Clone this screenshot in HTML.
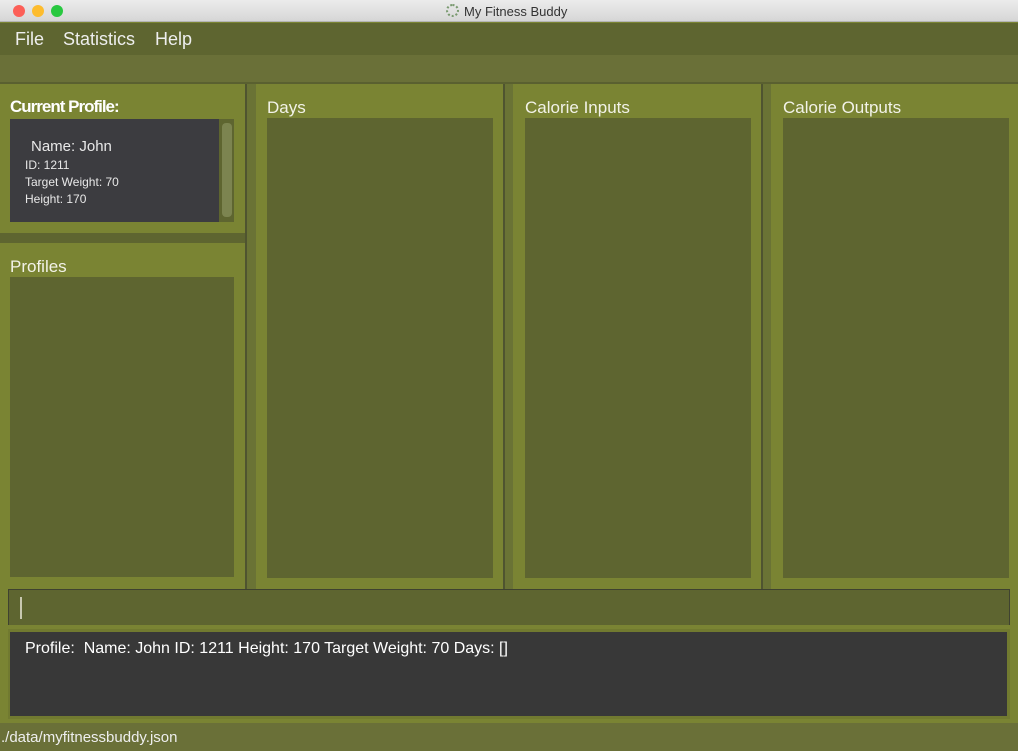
<!DOCTYPE html>
<html><head><style>
*{margin:0;padding:0;box-sizing:border-box}
body{width:1018px;height:751px;overflow:hidden;background:#7a8433;font-family:"Liberation Sans",sans-serif;position:relative;color:#fff}
.a{position:absolute}
.lbl{position:absolute;font-size:17px;color:#f2f2e8}
.in{position:absolute;background:#5e6530}
</style></head><body>
<div class="a" style="left:0;top:0;width:1018px;height:22px;background:linear-gradient(#ececec,#d6d6d6);border-bottom:1px solid #b5b5b5"></div>
<div class="a" style="left:13px;top:5px;width:12px;height:12px;border-radius:50%;background:#fc5f57"></div>
<div class="a" style="left:32px;top:5px;width:12px;height:12px;border-radius:50%;background:#fdbc2e"></div>
<div class="a" style="left:51px;top:5px;width:12px;height:12px;border-radius:50%;background:#28c840"></div>
<div class="a" style="left:446px;top:4px;width:13px;height:13px;border-radius:50%;border:2px dotted #7a9a70"></div>
<div class="a" style="left:464px;top:4px;font-size:13px;color:#333">My Fitness Buddy</div>
<div class="a" style="left:0;top:23px;width:1018px;height:32px;background:#5e6530"></div>
<div class="a" style="left:15px;top:29px;font-size:18px;color:#eee">File</div>
<div class="a" style="left:63px;top:29px;font-size:18px;color:#eee">Statistics</div>
<div class="a" style="left:155px;top:29px;font-size:18px;color:#eee">Help</div>
<div class="a" style="left:0;top:55px;width:1018px;height:29px;background:#6a7038;border-bottom:2px solid #5a6030"></div>
<!-- dividers -->
<div class="a" style="left:245px;top:84px;width:11px;height:505px;background:#6a7335;border-left:2px solid #4f5430"></div>
<div class="a" style="left:503px;top:84px;width:10px;height:505px;background:#6a7335;border-left:2px solid #4f5430"></div>
<div class="a" style="left:761px;top:84px;width:10px;height:505px;background:#6a7335;border-left:2px solid #4f5430"></div>
<div class="a" style="left:0;top:233px;width:245px;height:10px;background:#5e6530"></div>
<!-- current profile -->
<div class="a" style="left:10px;top:97px;font-size:17px;font-weight:bold;letter-spacing:-1px">Current Profile:</div>
<div class="a" style="left:10px;top:119px;width:224px;height:103px;background:#5e6530"></div>
<div class="a" style="left:10px;top:119px;width:209px;height:103px;background:#3c3c40"></div>
<div class="a" style="left:222px;top:123px;width:10px;height:94px;border-radius:4px;background:#7c8450"></div>
<div class="a" style="left:31px;top:138px;font-size:15px;color:#e8e8e8">Name: John</div>
<div class="a" style="left:25px;top:157px;font-size:12px;color:#e8e8e8;line-height:17px">ID: 1211<br>Target Weight: 70<br>Height: 170</div>
<div class="lbl" style="left:10px;top:257px">Profiles</div>
<div class="in" style="left:10px;top:277px;width:224px;height:300px"></div>
<div class="lbl" style="left:267px;top:98px">Days</div>
<div class="in" style="left:267px;top:118px;width:226px;height:460px"></div>
<div class="lbl" style="left:525px;top:98px">Calorie Inputs</div>
<div class="in" style="left:525px;top:118px;width:226px;height:460px"></div>
<div class="lbl" style="left:783px;top:98px">Calorie Outputs</div>
<div class="in" style="left:783px;top:118px;width:226px;height:460px"></div>
<!-- command box -->
<div class="a" style="left:8px;top:589px;width:1002px;height:36px;background:#5e6530;border:1px solid #3f4230;border-bottom:none"></div>
<div class="a" style="left:20px;top:597px;width:2px;height:22px;background:#c8c8b0"></div>
<div class="a" style="left:8px;top:629px;width:1002px;height:90px;background:#717a30"></div>
<div class="a" style="left:10px;top:632px;width:997px;height:84px;background:#383838"></div>
<div class="a" style="left:25px;top:640px;font-size:16px">Profile:&nbsp; Name: John ID: 1211 Height: 170 Target Weight: 70 Days: []</div>
<div class="a" style="left:0;top:723px;width:1018px;height:28px;background:#6a7038"></div>
<div class="a" style="left:1px;top:729px;font-size:15px;color:#eee">./data/myfitnessbuddy.json</div>
</body></html>
